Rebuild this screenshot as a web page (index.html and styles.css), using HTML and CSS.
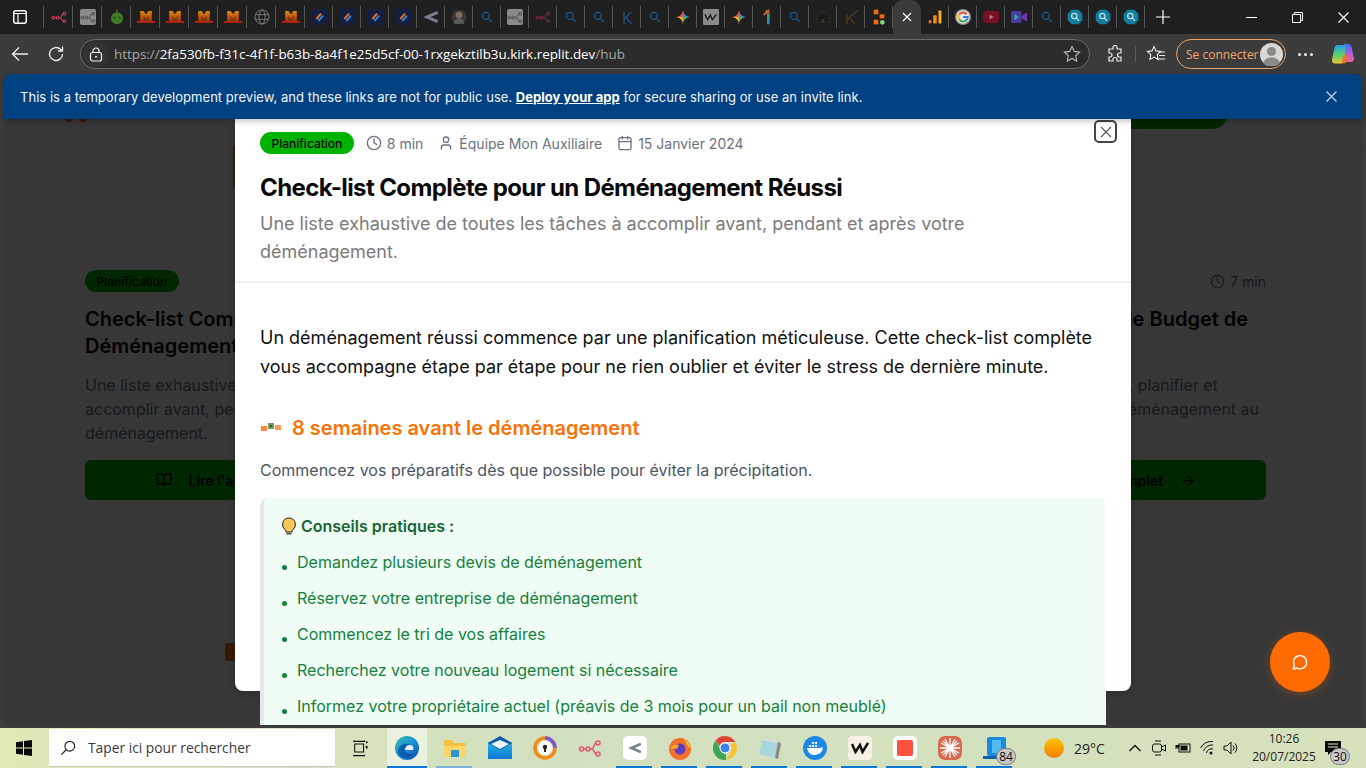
FILE: index.html
```html
<!DOCTYPE html>
<html lang="fr">

<head>
    <meta charset="UTF-8">
    <meta name="viewport" content="width=device-width, initial-scale=1.0">
    <title>Check-list Complète pour un Déménagement Réussi</title>
    <link rel="stylesheet" href="styles.css">
</head>

<body>
    <!-- icon sprites -->
    <svg class="sprites" aria-hidden="true">
        <defs>
            <linearGradient id="g-mistral" x1="0" y1="0" x2="0" y2="1"><stop offset="0" stop-color="#d98a10"/><stop offset="1" stop-color="#a81c10"/></linearGradient>
            <linearGradient id="g-edge" x1="0" y1="0" x2="1" y2="1"><stop offset="0" stop-color="#35c1a0"/><stop offset=".5" stop-color="#1a8fd8"/><stop offset="1" stop-color="#0c4fa8"/></linearGradient>
            <linearGradient id="g-sun" x1="0" y1="0" x2="0" y2="1"><stop offset="0" stop-color="#ffc400"/><stop offset="1" stop-color="#ee7d00"/></linearGradient>
            <linearGradient id="g-mail" x1="0" y1="0" x2="0" y2="1"><stop offset="0" stop-color="#28b4ee"/><stop offset="1" stop-color="#0f78d0"/></linearGradient>
            <linearGradient id="g-cop-a" x1="0" y1="0" x2="0" y2="1"><stop offset="0" stop-color="#1f9fe8"/><stop offset=".55" stop-color="#5fd06a"/><stop offset="1" stop-color="#f2c230"/></linearGradient>
            <linearGradient id="g-cop-b" x1="0" y1="0" x2="0" y2="1"><stop offset="0" stop-color="#3a6ff0"/><stop offset=".5" stop-color="#b05ae0"/><stop offset="1" stop-color="#f0609a"/></linearGradient>
            <symbol id="i-nodes" viewBox="0 0 24 24"><g fill="none" stroke="currentColor" stroke-width="1.6"><circle cx="3.5" cy="13" r="2"/><circle cx="10" cy="13" r="2"/><circle cx="20" cy="7" r="2"/><circle cx="20" cy="18" r="2"/><path d="M5.5 13H8M12 13h2c2 0 2-6 4-6M14 13c2 0 2 5 4 5"/></g></symbol>
            <symbol id="i-mistral" viewBox="0 0 24 24" preserveAspectRatio="none"><path d="M5 3h4l3 5 3-5h4v15h4v3H1v-3h4z" fill="url(#g-mistral)"/><path d="M9 10l3 5 3-5v8H9z" fill="#6b3d10"/></symbol>
            <symbol id="i-globe" viewBox="0 0 24 24"><g fill="none" stroke="#8a8a8a" stroke-width="1.2"><circle cx="12" cy="12" r="10.5"/><ellipse cx="12" cy="12" rx="4.5" ry="10.5"/><path d="M2 8.5h20M2 15.5h20"/></g></symbol>
            <symbol id="i-pencil" viewBox="0 0 24 24"><rect width="24" height="24" rx="2" fill="#152040"/><path d="M8 15l7-8" stroke="#d9742c" stroke-width="3"/><path d="M11 18l7-8" stroke="#3f7fc8" stroke-width="3"/></symbol>
            <symbol id="i-search" viewBox="0 0 24 24"><g fill="none" stroke="#1a5488" stroke-width="2.4"><circle cx="10" cy="10" r="6"/><path d="M14.5 14.5l6 6"/></g></symbol>
            <symbol id="i-octa" viewBox="0 0 24 24"><path d="M7 1h10l6 6v10l-6 6H7l-6-6V7z" fill="#127d9c"/><g fill="none" stroke="#b8dce6" stroke-width="2"><circle cx="11" cy="10.500" r="4"/><path d="M14 13.500l4 4"/></g></symbol>
            <symbol id="i-chev" viewBox="0 0 24 24"><g fill="none" stroke="#76808c" stroke-width="4.500"><path d="M22 5L6 12l16 7"/></g></symbol>
            <symbol id="i-gem" viewBox="0 0 24 24"><path d="M12 1c1 7 4 10 11 11H12z" fill="#3f8cf0"/><path d="M23 12c-7 1-10 4-11 11V12z" fill="#4aa860"/><path d="M12 23c-1-7-4-10-11-11h11z" fill="#e0b030"/><path d="M1 12c7-1 10-4 11-11v11z" fill="#d8584c"/></symbol>
            <symbol id="i-w" viewBox="0 0 24 24"><rect width="24" height="24" rx="2" fill="#8a8a86"/><path d="M3 8l4 8 4-7 3 7 6-8" fill="none" stroke="#161616" stroke-width="2"/></symbol>
            <symbol id="i-edit" viewBox="0 0 24 24"><path d="M12 2v4" stroke="#d8a020" stroke-width="4"/><path d="M7 9l7-6v4" fill="none" stroke="#d35a40" stroke-width="3"/><path d="M14 7v8" stroke="#38a060" stroke-width="4"/><path d="M14 15v8" stroke="#3a7ad0" stroke-width="4"/></symbol>
            <symbol id="i-arch" viewBox="0 0 24 24"><path d="M2 20C2 9 7 5 12 5s10 4 10 15z" fill="#1a1a1a" stroke="#303030" stroke-width="1.500"/><path d="M10 20v-5h4v5" fill="#3a3a18"/></symbol>
            <symbol id="i-klogo" viewBox="0 0 24 24"><path d="M6 23V8M6 16L22 2M9 13l9 9" fill="none" stroke="#54431c" stroke-width="1.800"/></symbol>
            <symbol id="i-flow" viewBox="0 0 24 24"><rect x="4" y="1" width="7" height="7" fill="#f06a10"/><rect x="13" y="8" width="7" height="6" fill="#f06a10"/><rect x="4" y="16" width="7" height="7" fill="#f06a10"/><circle cx="17" cy="20" r="3.500" fill="#7ed67a"/></symbol>
            <symbol id="i-bars" viewBox="0 0 24 24"><rect x="1" y="17" width="5" height="6" rx="2.500" fill="#e67818"/><rect x="9" y="9" width="6" height="14" rx="1" fill="#f08e18"/><rect x="18" y="1" width="5" height="22" rx="1" fill="#f6b01a"/></symbol>
            <symbol id="i-google" viewBox="0 0 24 24"><circle cx="12" cy="12" r="12" fill="#8c8c8c"/><circle cx="12" cy="12" r="10" fill="#e6e6e6"/><g fill="none" stroke-width="3"><path d="M17.500 8A7 7 0 0 0 6.500 8" stroke="#d8503f"/><path d="M6.500 8a7 7 0 0 0 0 8" stroke="#e3b21c"/><path d="M6.500 16a7 7 0 0 0 11 .5" stroke="#3ea45a"/><path d="M12 12h7a7 7 0 0 1-1.500 4.500" stroke="#4080e0"/></g></symbol>
            <symbol id="i-yt" viewBox="0 0 24 24"><rect y="3" width="24" height="18" rx="5" fill="#7a1028"/><path d="M10 8.500l6 3.500-6 3.500z" fill="#b88"/></symbol>
            <symbol id="i-video" viewBox="0 0 24 24"><rect y="3" width="16" height="18" rx="2" fill="#4a3a9c"/><path d="M16 10l8-5v14l-8-5z" fill="#6a3ab0"/><path d="M5 7l7 5-7 5z" fill="#25a8b0"/></symbol>
            <symbol id="i-clock" viewBox="0 0 24 24"><g fill="none" stroke="currentColor" stroke-width="2" stroke-linecap="round" stroke-linejoin="round"><circle cx="12" cy="12" r="10"/><path d="M12 6v6l4 2"/></g></symbol>
            <symbol id="i-user" viewBox="0 0 24 24"><g fill="none" stroke="currentColor" stroke-width="2" stroke-linecap="round" stroke-linejoin="round"><path d="M19 21v-2a4 4 0 0 0-4-4H9a4 4 0 0 0-4 4v2"/><circle cx="12" cy="7" r="4"/></g></symbol>
            <symbol id="i-cal" viewBox="0 0 24 24"><g fill="none" stroke="currentColor" stroke-width="2" stroke-linecap="round" stroke-linejoin="round"><path d="M8 2v4M16 2v4M3 10h18"/><rect x="3" y="4" width="18" height="18" rx="2"/></g></symbol>
            <symbol id="i-book" viewBox="0 0 24 24"><path d="M12 7v14M3 18a1 1 0 0 1-1-1V4a1 1 0 0 1 1-1h5a4 4 0 0 1 4 4 4 4 0 0 1 4-4h5a1 1 0 0 1 1 1v13a1 1 0 0 1-1 1h-6a3 3 0 0 0-3 3 3 3 0 0 0-3-3z" fill="none" stroke="currentColor" stroke-width="2" stroke-linecap="round" stroke-linejoin="round"/></symbol>
        </defs>
    </svg>

    <header class="tabstrip">
        <span class="tab-toggle"><svg width="14" height="14" viewBox="0 0 14 14"><rect x=".75" y=".75" width="12.500" height="12.500" rx="2" fill="none" stroke="#fff" stroke-width="1.500"/><path d="M1 3.500h12M5 3.500v9.500" stroke="#fff" stroke-width="1.200"/></svg></span>
        <span class="tab-sep"></span>
        <div class="tabs">
            <span class="tab wide pink"><svg><use href="#i-nodes"/></svg></span>
            <span class="tab wide"><svg class="tile-grey"><use href="#i-nodes"/></svg></span>
            <span class="tab wide"><svg viewBox="0 0 24 24"><circle cx="12" cy="14" r="9" fill="#3f7a26"/><rect x="11" y="1" width="2" height="5" fill="#3f7a26"/><circle cx="8" cy="13" r="1.500" fill="#24461a"/><circle cx="16" cy="13" r="1.500" fill="#24461a"/></svg></span>
            <span class="tab wide"><svg class="mistral"><use href="#i-mistral"/></svg></span>
            <span class="tab wide"><svg class="mistral"><use href="#i-mistral"/></svg></span>
            <span class="tab wide"><svg class="mistral"><use href="#i-mistral"/></svg></span>
            <span class="tab wide"><svg class="mistral"><use href="#i-mistral"/></svg></span>
            <span class="tab wide"><svg><use href="#i-globe"/></svg></span>
            <span class="tab wide"><svg class="mistral"><use href="#i-mistral"/></svg></span>
            <span class="tab"><svg><use href="#i-pencil"/></svg></span>
            <span class="tab"><svg><use href="#i-pencil"/></svg></span>
            <span class="tab"><svg><use href="#i-pencil"/></svg></span>
            <span class="tab"><svg><use href="#i-pencil"/></svg></span>
            <span class="tab"><svg><use href="#i-chev"/></svg></span>
            <span class="tab"><svg viewBox="0 0 24 24"><circle cx="12" cy="12" r="11" fill="#3a3734"/><circle cx="12" cy="9" r="5" fill="#7a6c62"/><path d="M4 22c1-6 4-8 8-8s7 2 8 8" fill="#5c5c5c"/></svg></span>
            <span class="tab"><svg class="small"><use href="#i-search"/></svg></span>
            <span class="tab"><svg class="tile-grey"><use href="#i-nodes"/></svg></span>
            <span class="tab pink-dim"><svg><use href="#i-nodes"/></svg></span>
            <span class="tab"><svg class="small"><use href="#i-search"/></svg></span>
            <span class="tab"><svg class="small"><use href="#i-search"/></svg></span>
            <span class="tab tab-k">K</span>
            <span class="tab"><svg class="small"><use href="#i-search"/></svg></span>
            <span class="tab"><svg><use href="#i-gem"/></svg></span>
            <span class="tab"><svg><use href="#i-w"/></svg></span>
            <span class="tab"><svg><use href="#i-gem"/></svg></span>
            <span class="tab"><svg><use href="#i-edit"/></svg></span>
            <span class="tab"><svg class="small"><use href="#i-search"/></svg></span>
            <span class="tab"><svg><use href="#i-arch"/></svg></span>
            <span class="tab"><svg><use href="#i-klogo"/></svg></span>
            <span class="tab"><svg><use href="#i-flow"/></svg></span>
            <span class="tab active"><svg class="tab-close" viewBox="0 0 10 10"><path d="M1 1l8 8M9 1L1 9" stroke="#fff" stroke-width="1.200"/></svg></span>
            <span class="tab"><svg class="bars"><use href="#i-bars"/></svg></span>
            <span class="tab"><svg><use href="#i-google"/></svg></span>
            <span class="tab"><svg><use href="#i-yt"/></svg></span>
            <span class="tab"><svg><use href="#i-video"/></svg></span>
            <span class="tab"><svg class="small"><use href="#i-search"/></svg></span>
            <span class="tab"><svg><use href="#i-octa"/></svg></span>
            <span class="tab"><svg><use href="#i-octa"/></svg></span>
            <span class="tab"><svg><use href="#i-octa"/></svg></span>
        </div>
        <span class="new-tab"><svg width="14" height="14" viewBox="0 0 14 14"><path d="M7 0v14M0 7h14" stroke="#fff" stroke-width="1.200"/></svg></span>
        <div class="win-controls">
            <span><svg width="11" height="11" viewBox="0 0 11 11"><path d="M0 5.500h11" stroke="#fff"/></svg></span>
            <span><svg width="11" height="11" viewBox="0 0 11 11"><path d="M.5 2.500h8v8h-8zM2.500 2.500v-2h8v8h-2" fill="none" stroke="#fff"/></svg></span>
            <span><svg width="11" height="11" viewBox="0 0 11 11"><path d="M.5.5l10 10M10.500.5l-10 10" stroke="#fff" stroke-width="1.100"/></svg></span>
        </div>
    </header>

    <nav class="toolbar">
        <span class="tool back"><svg width="18" height="16" viewBox="0 0 18 16"><path d="M17 8H1.500M8 1.500L1.500 8 8 14.500" fill="none" stroke="#eee" stroke-width="1.300"/></svg></span>
        <span class="tool reload"><svg width="18" height="18" viewBox="0 0 18 18"><path d="M15.500 9a6.500 6.500 0 1 1-2-4.700L15.500 6M15.500 1.500V6H11" fill="none" stroke="#eee" stroke-width="1.300"/></svg></span>
        <div class="urlbar">
            <span class="lock"><svg width="14" height="15" viewBox="0 0 14 15"><rect x="1.500" y="5.500" width="11" height="8.500" rx="2" fill="none" stroke="#eee" stroke-width="1.200"/><path d="M4 5.500V4a3 3 0 0 1 6 0v1.500" fill="none" stroke="#eee" stroke-width="1.200"/><circle cx="7" cy="9.700" r="1" fill="#eee"/></svg></span>
            <span class="url"><span class="url-dim">https://</span>2fa530fb-f31c-4f1f-b63b-8a4f1e25d5cf-00-1rxgekztilb3u.kirk.replit.dev<span class="url-dim">/hub</span></span>
            <svg class="url-star" width="18" height="18" viewBox="0 0 18 18"><path d="M9 1.500l2.300 4.900 5.300.7-3.900 3.700 1 5.300L9 13.500l-4.700 2.600 1-5.300L1.400 7.100l5.300-.7z" fill="none" stroke="#bbb" stroke-width="1.100"/></svg>
        </div>
        <span class="tool ext"><svg width="18" height="18" viewBox="0 0 18 18"><path d="M7 2.500a2 2 0 0 1 4 0V4h4v4h-1.500a2 2 0 0 0 0 4H15v4h-4v-1.500a2 2 0 0 0-4 0V16H3v-4h1a2 2 0 0 0 0-4H3V4h4z" fill="none" stroke="#eee" stroke-width="1.200"/></svg></span>
        <span class="tool-sep"></span>
        <span class="tool fav"><svg width="20" height="18" viewBox="0 0 20 18"><path d="M8 1.500l2 4.400 4.600.6-3.400 3.200.9 4.700L8 12.100l-4.100 2.300.9-4.700L1.400 6.500 6 5.900z" fill="none" stroke="#eee" stroke-width="1.100"/><path d="M13 7h6M13 10.500h6M11 14h8" stroke="#eee" stroke-width="1.100"/></svg></span>
        <div class="signin">
            <span>Se connecter</span>
            <svg class="avatar" width="23" height="23" viewBox="0 0 23 23"><circle cx="11.500" cy="11.500" r="11.500" fill="#d8d8d4"/><circle cx="11.500" cy="8.500" r="4.500" fill="#8a8a86"/><path d="M3 20c1.500-4 4.500-5.500 8.500-5.500S18.500 16 20 20a11.500 11.500 0 0 1-17 0z" fill="#8a8a86"/></svg>
        </div>
        <span class="tool dots"><i></i><i></i><i></i></span>
        <span class="tool copilot"><svg width="24" height="24" viewBox="0 0 24 24"><path d="M13 2h4c2 0 3 1 3.500 3L23 16c.4 2-1 4-3 4h-7l1.500-11c.2-1.500-.5-2.500-2-2.500z" fill="url(#g-cop-b)"/><path d="M7 3h6c2 0 2.500 1.500 2 3.500L13.500 18c-.4 2-1.500 3.500-3.500 3.500H4c-2 0-3.500-2-3-4L3.500 6C4 4 5 3 7 3z" fill="url(#g-cop-a)"/><path d="M12 13h6l-2 6c-.5 1.500-1.500 2.500-3 2.500h-2z" fill="#f0703a" opacity=".9"/></svg></span>
    </nav>

    <div class="frame">
        <div class="banner">
            <p>This is a temporary development preview, and these links are not for public use. <a href="#">Deploy your app</a> for secure sharing or use an invite link.</p>
            <svg width="11" height="11" viewBox="0 0 11 11"><path d="M.5.5l10 10M10.500.5l-10 10" stroke="#c5d4e6" stroke-width="1.200"/></svg>
        </div>

        <div class="page">
            <!-- dimmed page behind the dialog -->
            <div class="site-head">
                <span class="site-logo"><i></i><i></i></span>
                <span class="site-cta"></span>
            </div>
            <div class="card-grid">
                <article class="card">
                    <div class="card-media"><span class="media-glow"></span></div>
                    <div class="card-meta"><span class="card-pill">Planification</span></div>
                    <h3>Check-list Complète pour un Déménagement Réussi</h3>
                    <p>Une liste exhaustive de toutes les tâches à accomplir avant, pendant et après votre déménagement.</p>
                    <a class="card-btn"><svg><use href="#i-book"/></svg>Lire l'article complet<b>→</b></a>
                </article>
                <article class="card"></article>
                <article class="card">
                    <div class="card-media"></div>
                    <div class="card-meta"><span class="card-time"><svg><use href="#i-clock"/></svg>7 min</span></div>
                    <h3>Comment Bien Gérer le Budget de Déménagement</h3>
                    <p>Tous les outils pour estimer, planifier et prévoir les coûts de votre déménagement au meilleur prix.</p>
                    <a class="card-btn"><svg><use href="#i-book"/></svg>Lire l'article complet<b>→</b></a>
                </article>
                <article class="card card-next"><span class="media-icon"></span></article>
                <article class="card card-next"></article>
                <article class="card card-next"></article>
            </div>
            <div class="scrim"></div>

            <section class="modal">
                <button class="modal-close"><svg width="14" height="14" viewBox="0 0 14 14"><path d="M2 2l10 10M12 2L2 12" stroke="#555" stroke-width="1.100"/></svg></button>
                <div class="modal-head">
                    <div class="meta">
                        <span class="pill">Planification</span>
                        <span class="meta-item"><svg><use href="#i-clock"/></svg>8 min</span>
                        <span class="meta-item"><svg><use href="#i-user"/></svg>Équipe Mon Auxiliaire</span>
                        <span class="meta-item"><svg><use href="#i-cal"/></svg>15 Janvier 2024</span>
                    </div>
                    <h1>Check-list Complète pour un Déménagement Réussi</h1>
                    <p class="subtitle">Une liste exhaustive de toutes les tâches à accomplir avant, pendant et après votre déménagement.</p>
                </div>
                <div class="modal-body">
                    <p class="intro">Un déménagement réussi commence par une planification méticuleuse. Cette check-list complète vous accompagne étape par étape pour ne rien oublier et éviter le stress de dernière minute.</p>
                    <h2><svg width="22" height="10" viewBox="0 0 22 10"><rect x="1" y="3" width="6" height="5" fill="#f58a3c"/><rect x="8" y="0" width="6" height="6" fill="#6f9a5a"/><rect x="10" y="2" width="2" height="2" fill="#3d5a34"/><rect x="15" y="2" width="6" height="5" fill="#f79a5a"/></svg>8 semaines avant le déménagement</h2>
                    <p class="lead">Commencez vos préparatifs dès que possible pour éviter la précipitation.</p>
                    <div class="tips">
                        <h4><svg width="16" height="18" viewBox="0 0 16 18"><path d="M8 1a6.500 6.500 0 0 0-4 11.600c.8.700 1 1.400 1 2.400h6c0-1 .2-1.700 1-2.400A6.500 6.500 0 0 0 8 1z" fill="#fdc75c" stroke="#222" stroke-width="1"/><path d="M5.500 16h5v1.500h-5z" fill="#555"/></svg>Conseils pratiques :</h4>
                        <ul>
                            <li>Demandez plusieurs devis de déménagement</li>
                            <li>Réservez votre entreprise de déménagement</li>
                            <li>Commencez le tri de vos affaires</li>
                            <li>Recherchez votre nouveau logement si nécessaire</li>
                            <li>Informez votre propriétaire actuel (préavis de 3 mois pour un bail non meublé)</li>
                        </ul>
                    </div>
                </div>
            </section>

            <button class="chat-fab"><svg width="18" height="18" viewBox="0 0 18 18"><path d="M2.200 16l1-3.600A6.600 6.600 0 1 1 5.800 15z" fill="none" stroke="#fff" stroke-width="1.400" stroke-linejoin="round"/></svg></button>
        </div>
    </div>

    <footer class="taskbar">
        <span class="start"><svg width="16" height="16" viewBox="0 0 16 16"><path d="M0 2.200l7-1V7.500H0zM8 1l8-1v7.500H8zM0 8.500h7v6.300l-7-1zM8 8.500h8V16l-8-1.100z" fill="#0a0a0a"/></svg></span>
        <div class="task-search">
            <svg width="16" height="16" viewBox="0 0 18 18"><circle cx="11" cy="7" r="5.500" fill="none" stroke="#222" stroke-width="1.300"/><path d="M7 11l-5.500 5.500" stroke="#222" stroke-width="1.400"/></svg>
            <span>Taper ici pour rechercher</span>
        </div>
        <span class="taskview"><svg width="16" height="17" viewBox="0 0 18 18"><path d="M2 0v1h12V0M3 4h10v9H3zM2 16v1h12v-1" fill="none" stroke="#111" stroke-width="1.200"/><rect x="15.500" y="1" width="2" height="2" fill="#111"/><rect x="15.500" y="6" width="2" height="3" fill="#111"/></svg></span>
        <div class="task-apps">
            <span class="app current on"><svg width="24" height="24" viewBox="0 0 24 24"><circle cx="12" cy="12" r="12" fill="url(#g-edge)"/><path d="M3 15c1-6 6-8 10-7 4 1 5 4 4 6h-7c0 3 4 5 10 3-3 5-9 6-13 4-3-1-4-3-4-6z" fill="#0c5cb0"/><path d="M10 14c0-3 2-5 5-5s4 3 3 5z" fill="#fff" opacity=".9"/></svg></span>
            <span class="app on-light"><svg width="24" height="24" viewBox="0 0 24 24"><path d="M1 4h8l2 3h12v14H1z" fill="#f5c242"/><rect x="1" y="10" width="22" height="11" fill="#fbd46a"/><rect x="8" y="14" width="8" height="7" fill="#2b95d6"/></svg></span>
            <span class="app"><svg width="24" height="24" viewBox="0 0 24 24"><rect y="6" width="24" height="17" fill="url(#g-mail)"/><path d="M0 7L12 0l12 7-12 7z" fill="#0c5ba8"/><path d="M3 8l9-4 9 4-9 5z" fill="#eaf4fb"/></svg></span>
            <span class="app"><svg width="24" height="24" viewBox="0 0 24 24"><circle cx="12" cy="12" r="10" fill="none" stroke="#f08c1a" stroke-width="3.500"/><path d="M12 2a10 10 0 0 1 10 10" fill="none" stroke="#7a5ad0" stroke-width="3.500"/><circle cx="12" cy="12" r="7" fill="#fff"/><circle cx="12" cy="11" r="2.200" fill="#222"/><rect x="11" y="11" width="2" height="5" fill="#222"/></svg></span>
            <span class="app app-pink"><svg width="24" height="24"><use href="#i-nodes"/></svg></span>
            <span class="app on"><span class="app-tile white"><svg width="14" height="14"><use href="#i-chev"/></svg></span></span>
            <span class="app on"><svg width="24" height="24" viewBox="0 0 24 24"><circle cx="12" cy="13" r="11" fill="#f2702a"/><path d="M15 1c1 3 7 5 8 12l-4-4z" fill="#ffc01f"/><circle cx="12" cy="13" r="5.500" fill="#5b3cc4"/><path d="M2 12c2-3 6-4 9-3l-2 4z" fill="#ffa42b"/></svg></span>
            <span class="app on"><svg width="24" height="24" viewBox="0 0 24 24"><path d="M12 0a12 12 0 0 1 10.400 6H12a6 6 0 0 0-5.600 3.800L2.700 4.400A12 12 0 0 1 12 0z" fill="#dd4436"/><path d="M22.400 6A12 12 0 0 1 13 23.900l4.300-7.400A6 6 0 0 0 17.200 9z" fill="#fbc02d"/><path d="M13 24A12 12 0 0 1 2.700 4.400l4.700 8A6 6 0 0 0 13 18z" fill="#3da554"/><circle cx="12" cy="12" r="5" fill="#3f80ec" stroke="#fff" stroke-width="1"/></svg></span>
            <span class="app on-split"><svg width="24" height="24" viewBox="0 0 24 24"><path d="M5 2l15 3-3 17-16-4z" fill="#a6d8de"/><path d="M20 5l3 3-3 15-3-1z" fill="#8a8c80"/><path d="M5 2l15 3-.5 2L4.500 4z" fill="#ddd"/></svg></span>
            <span class="app on"><svg width="24" height="24" viewBox="0 0 24 24"><circle cx="12" cy="12" r="12" fill="#1d87e6"/><path d="M4 12h13c1-1 2-1 3 0-1 5-5 7-9 7-4 0-6-3-7-7z" fill="#fff"/><path d="M6 9h2v2H6zM9 9h2v2H9zM12 9h2v2h-2zM9 6h2v2H9zM12 6h2v2h-2z" fill="#fff"/></svg></span>
            <span class="app on"><span class="app-tile cream"><svg width="18" height="12" viewBox="0 0 18 12"><path d="M1 2l3.500 8L9 3l2.500 7L17 1" fill="none" stroke="#111" stroke-width="2.500"/></svg></span></span>
            <span class="app on"><span class="app-tile white"><span class="red-square"></span></span></span>
            <span class="app on"><span class="app-tile burst"><svg width="20" height="20" viewBox="0 0 20 20"><path d="M10 0v20M0 10h20M3 3l14 14M17 3L3 17M5 1l10 18M15 1L5 19M1 5l18 10M19 5L1 15" stroke="#fff" stroke-width="1.300"/></svg></span></span>
            <span class="app on"><svg width="24" height="24" viewBox="0 0 24 24"><rect x="4" y="1" width="19" height="19" rx="2" fill="#1a8ae0"/><rect x="9" y="4" width="9" height="13" fill="#54baf0"/><path d="M0 20h16v3H0z" fill="#0f5fae"/></svg><span class="count">84</span></span>
        </div>
        <div class="tray">
            <span class="weather"><svg width="20" height="20" viewBox="0 0 20 20"><circle cx="10" cy="10" r="10" fill="url(#g-sun)"/></svg>29°C</span>
            <span class="tray-icon"><svg width="12" height="8" viewBox="0 0 12 8"><path d="M.5 7L6 1.500 11.500 7" fill="none" stroke="#111" stroke-width="1.300"/></svg></span>
            <span class="tray-icon"><svg width="14" height="18" viewBox="0 0 14 18"><path d="M3 2h6M3 16h6" stroke="#111"/><rect x=".5" y="5" width="9" height="8" rx="2" fill="none" stroke="#111"/><path d="M9.500 8l4-2v6l-4-2" fill="none" stroke="#111"/></svg></span>
            <span class="tray-icon"><svg width="16" height="12" viewBox="0 0 16 12"><rect x="4" y="2" width="11" height="8" fill="none" stroke="#111"/><rect x="5.500" y="3.500" width="7" height="5" fill="#111"/><path d="M0 6h4M1 3v2h3V3" stroke="#111"/></svg></span>
            <span class="tray-icon"><svg width="14" height="14" viewBox="0 0 14 14"><g fill="none" stroke="#111"><path d="M.5 7A13 13 0 0 1 13 .500M3.500 10A9 9 0 0 1 13 4M6.500 12A5 5 0 0 1 13 8"/></g><circle cx="11" cy="12" r="1.500" fill="#111"/></svg></span>
            <span class="tray-icon"><svg width="16" height="14" viewBox="0 0 16 14"><path d="M1 5h3l4-4v12L4 9H1z" fill="none" stroke="#111"/><path d="M10 4.500a3.500 3.500 0 0 1 0 5M12 2.500a6.500 6.500 0 0 1 0 9" fill="none" stroke="#111"/></svg></span>
            <div class="clock"><span>10:26</span><span>20/07/2025</span></div>
            <span class="notif"><svg width="16" height="14" viewBox="0 0 16 14"><path d="M0 0h16v11H6l-3 3v-3H0z" fill="#0a0a0a"/><path d="M3 3h10M3 6h10" stroke="#dfe6c5"/></svg><span class="count">30</span></span>
        </div>
    </footer>
</body>

</html>
```
FILE: styles.css
```css
* {
    box-sizing: border-box;
}

html,
body {
    margin: 0;
    height: 100%;
}

body {
    width: 1366px;
    height: 768px;
    overflow: hidden;
    display: flex;
    flex-direction: column;
    font-family: "Inter", sans-serif;
    background-color: #3b3b3b;
}

.sprites {
    position: absolute;
    width: 0;
    height: 0;
}

/* browser chrome */
.tabstrip {
    height: 34px;
    flex: none;
    display: flex;
    align-items: center;
    background-color: #1f1f1f;
}

.tab-toggle {
    width: 44px;
    display: flex;
    justify-content: center;
    padding-right: 4px;
}

.tab-sep {
    width: 1px;
    height: 22px;
    margin-left: -1px;
    background-color: #555;
}

.tabs {
    display: flex;
    height: 34px;
}

.tab {
    width: 28px;
    height: 34px;
    flex: none;
    display: flex;
    align-items: center;
    justify-content: center;
    position: relative;
    color: #9a9a9a;
}

.tab::after {
    content: "";
    position: absolute;
    right: 0;
    top: 6px;
    height: 22px;
    width: 1px;
    background-color: #555;
}

.tab.wide {
    width: 29px;
}

.tab svg {
    width: 16px;
    height: 16px;
}

.tab svg.mistral {
    width: 20px;
    height: 16px;
}

.tab svg.small {
    width: 14px;
    height: 14px;
}

.tab svg.bars {
    width: 14px;
    height: 14px;
}

.tab svg.tile-grey {
    background-color: #8a8a8a;
    border-radius: 2px;
    color: #555;
}

.tab.pink {
    color: #c8405f;
}

.tab.pink-dim {
    color: #7a2c40;
}

.tab-k {
    font-size: 17px;
    font-family: "Open Sans", sans-serif;
    color: #234a8a;
}

.tab.active {
    background-color: #3b3b3b;
    border-radius: 10px 10px 0 0;
}

.tab.active::after {
    display: none;
}

.tab svg.tab-close {
    width: 10px;
    height: 10px;
}

.new-tab {
    width: 36px;
    display: flex;
    justify-content: center;
}

.win-controls {
    margin-left: auto;
    display: flex;
}

.win-controls span {
    width: 46px;
    display: flex;
    justify-content: center;
}

.toolbar {
    height: 40px;
    flex: none;
    display: flex;
    align-items: center;
    background-color: #3b3b3b;
}

.tool {
    flex: none;
    display: flex;
    align-items: center;
    justify-content: center;
}

.back {
    width: 40px;
}

.reload {
    width: 32px;
}

.urlbar {
    width: 1010px;
    height: 30px;
    flex: none;
    margin-left: 8px;
    display: flex;
    align-items: center;
    border: 1px solid #6c6c6c;
    border-radius: 15px;
    background-color: #2b2b2b;
}

.lock {
    width: 26px;
    height: 26px;
    margin-left: 2px;
    display: flex;
    align-items: center;
    justify-content: center;
    border-radius: 50%;
    background-color: #333;
}

.url {
    margin-left: 5px;
    font-family: "Open Sans", sans-serif;
    font-size: 13.400px;
    color: #fff;
    white-space: nowrap;
}

.url-dim {
    color: #a8a8a8;
}

.url-star {
    margin-left: auto;
    margin-right: 8px;
}

.ext {
    width: 45px;
    padding-left: 5px;
}

.tool-sep {
    width: 1px;
    height: 16px;
    flex: none;
    background-color: #5a5a5a;
}

.fav {
    width: 40px;
}

.signin {
    width: 110px;
    height: 30px;
    flex: none;
    display: flex;
    align-items: center;
    justify-content: space-between;
    padding: 0 2px 0 9px;
    border: 1px solid #e9a468;
    border-radius: 15px;
    font-family: "Open Sans", sans-serif;
    font-size: 12px;
    color: #f1a86c;
}

.dots {
    width: 38px;
    gap: 3px;
}

.dots i {
    width: 3px;
    height: 3px;
    border-radius: 50%;
    background-color: #eee;
}

.copilot {
    width: 38px;
}

/* page area */
.frame {
    flex: 1;
    min-height: 0;
    display: flex;
    flex-direction: column;
    padding: 0 4px 3px;
    background-color: #3b3b3b;
}

.banner {
    height: 45px;
    flex: none;
    display: flex;
    align-items: center;
    justify-content: space-between;
    padding: 0 25px 0 16px;
    position: relative;
    z-index: 5;
    border-radius: 8px 8px 0 0;
    background-color: #004182;
    box-shadow: 0 2px 6px rgba(0, 0, 0, 0.25);
}

.banner p {
    margin: 0;
    font-size: 13px;
    letter-spacing: 0.03px;
    color: #f2f5f9;
}

.banner a {
    font-weight: 700;
    color: #fff;
}

.page {
    flex: 1;
    min-height: 0;
    position: relative;
    overflow: hidden;
    background-color: #fff;
}

.site-head {
    height: 27px;
    display: flex;
    justify-content: space-between;
    align-items: flex-end;
    padding: 0 135px 16px 61px;
    background-color: #fff;
    border-bottom: 1px solid #e5e7eb;
}

.site-logo {
    display: flex;
    gap: 6px;
    margin-bottom: 7px;
}

.site-logo i {
    width: 8px;
    height: 4px;
    border-radius: 0 0 4px 4px;
    background-color: #f06a10;
}

.site-cta {
    width: 180px;
    height: 30px;
    margin-top: -20px;
    border-radius: 0 0 14px 14px;
    background-color: #00b300;
}

.card-grid {
    display: grid;
    grid-template-columns: repeat(3, 1fr);
    gap: 26px 24px;
    padding: 0 71px 0 56px;
    background-color: #fff;
}

.card {
    height: 378px;
    padding: 0 24px;
    position: relative;
    border: 1px solid #eeeeee;
    border-top: none;
    border-radius: 0 0 12px 12px;
    background-color: #fff;
}

.card-next {
    border-top: 1px solid #eeeeee;
    border-radius: 12px;
}

.card-media {
    height: 124px;
    position: relative;
}

.media-glow {
    position: absolute;
    left: 148px;
    top: 0;
    width: 60px;
    height: 42px;
    background-color: #f28a2c;
}

.media-icon {
    position: absolute;
    left: 164px;
    top: 92px;
    width: 60px;
    height: 18px;
    border-radius: 2px;
    background-color: #f97316;
}

.card-meta {
    height: 22px;
    display: flex;
    justify-content: space-between;
    align-items: center;
}

.card-pill {
    height: 22px;
    padding: 0 11.500px;
    display: flex;
    align-items: center;
    border-radius: 11px;
    font-size: 12px;
    font-weight: 500;
    color: #000;
    background-color: #00b300;
}

.card-time {
    margin-left: auto;
    display: flex;
    align-items: center;
    gap: 5px;
    font-size: 14px;
    color: #6b7280;
}

.card-time svg {
    width: 15px;
    height: 15px;
}

.card h3 {
    margin: 14px 0 0;
    font-size: 20px;
    line-height: 27px;
    font-weight: 600;
    color: #0a0a0a;
}

.card p {
    margin: 13px 0 0;
    font-size: 16px;
    line-height: 24px;
    color: #6b7280;
}

.card-btn {
    margin-top: 15px;
    height: 40px;
    display: flex;
    align-items: center;
    justify-content: center;
    gap: 17px;
    border-radius: 6px;
    font-size: 14px;
    font-weight: 600;
    color: #000;
    background-color: #00b300;
}

.card-btn svg {
    width: 16px;
    height: 16px;
}

.card-btn b {
    font-weight: 400;
    font-size: 16px;
}

.scrim {
    position: absolute;
    inset: 0;
    background-color: rgba(0, 0, 0, 0.785);
}

/* dialog */
.modal {
    position: absolute;
    left: 231px;
    top: 0;
    width: 896px;
    height: 572px;
    background-color: #fff;
    border-radius: 0 0 8px 8px;
    box-shadow: 0 2px 8px rgba(0, 0, 0, 0.2);
}

.modal-close {
    position: absolute;
    right: 14px;
    top: 1px;
    width: 23px;
    height: 23px;
    padding: 0;
    display: flex;
    align-items: center;
    justify-content: center;
    border: 2px solid #444;
    border-radius: 5px;
    background-color: #fff;
}

.modal-head {
    padding: 13px 60px 15px 25px;
    border-bottom: 2px solid #f0f0f0;
}

.meta {
    display: flex;
    align-items: center;
    gap: 15px;
}

.pill {
    height: 22px;
    margin-right: -3px;
    padding: 0 11.500px;
    display: flex;
    align-items: center;
    border-radius: 11px;
    font-size: 12px;
    font-weight: 500;
    color: #000;
    background-color: #00b300;
}

.meta-item {
    display: flex;
    align-items: center;
    gap: 5px;
    font-size: 14px;
    color: #6b7280;
}

.meta-item svg {
    width: 16px;
    height: 16px;
}

.modal-head h1 {
    margin: 18px 0 0;
    font-size: 24px;
    line-height: 32px;
    font-weight: 700;
    letter-spacing: -0.6px;
    color: #0a0a0a;
}

.subtitle {
    margin: 6px 0 0;
    font-size: 18px;
    line-height: 28px;
    color: #7b7b7b;
}

.modal-body {
    padding: 40px 25px 0;
}

.intro {
    margin: 0;
    font-size: 18px;
    line-height: 29px;
    color: #111;
}

.modal-body h2 {
    margin: 33px 0 0;
    display: flex;
    align-items: center;
    gap: 10px;
    font-size: 20px;
    line-height: 28px;
    font-weight: 600;
    color: #f97306;
}

.lead {
    margin: 16px 0 0;
    font-size: 16px;
    line-height: 24px;
    color: #4b5563;
}

.tips {
    margin-top: 16px;
    padding: 16px 17px 12px;
    border-left: 4px solid #e5e7eb;
    border-radius: 8px;
    background-color: #f0fdf4;
}

.tips h4 {
    margin: 0;
    display: flex;
    align-items: center;
    gap: 4px;
    font-size: 16px;
    line-height: 24px;
    font-weight: 600;
    color: #166534;
}

.tips ul {
    margin: 12px 0 0;
    padding: 0;
    list-style: none;
}

.tips li {
    position: relative;
    margin-bottom: 12px;
    padding-left: 16px;
    font-size: 16px;
    line-height: 24px;
    color: #15803d;
}

.tips li::before {
    content: "";
    position: absolute;
    left: 1px;
    top: 15px;
    width: 5px;
    height: 5px;
    border-radius: 50%;
    background-color: #15803d;
}

.chat-fab {
    position: absolute;
    left: 1266px;
    top: 513px;
    width: 60px;
    height: 60px;
    padding: 0;
    display: flex;
    align-items: center;
    justify-content: center;
    border: none;
    border-radius: 50%;
    background-color: #ff6b00;
    box-shadow: 0 2px 10px rgba(255, 107, 0, 0.3);
}

/* windows taskbar */
.taskbar {
    height: 40px;
    flex: none;
    display: flex;
    align-items: center;
    background: linear-gradient(90deg, #dfe8b6, #d2e0c0 40%, #d6e2bc);
    font-family: "Open Sans", sans-serif;
    color: #222;
}

.start {
    width: 48px;
    flex: none;
    display: flex;
    justify-content: center;
}

.task-search {
    width: 286px;
    height: 38px;
    flex: none;
    margin-left: 1px;
    margin-right: 1px;
    display: flex;
    align-items: center;
    gap: 12px;
    padding-left: 11px;
    background-color: #fff;
    border-bottom: 1px solid #c8c8c8;
    font-size: 13.800px;
    color: #3a3a3a;
}

.taskview {
    width: 48px;
    flex: none;
    display: flex;
    justify-content: center;
}

.task-apps {
    display: flex;
    flex: none;
    height: 40px;
    margin-left: 3px;
}

.app {
    width: 45px;
    height: 40px;
    flex: none;
    display: flex;
    align-items: center;
    justify-content: center;
    position: relative;
}

.app.current {
    width: 40px;
    margin-right: 5px;
    background-color: rgba(255, 255, 255, 0.5);
}

.app.on::after,
.app.on-light::after,
.app.on-split::after {
    content: "";
    position: absolute;
    left: 4px;
    right: 5px;
    bottom: 0;
    height: 2px;
    background-color: #0a78d4;
}

.app.current::after {
    left: 0;
    right: 0;
}

.app.on-light::after {
    background-color: #7fb4de;
}

.app-pink {
    color: #de5a78;
}

.app-tile {
    width: 20px;
    height: 20px;
    display: flex;
    align-items: center;
    justify-content: center;
    border-radius: 4px;
}

.app-tile.white {
    width: 24px;
    height: 24px;
    background-color: #fff;
    border-radius: 5px;
}

.app-tile.cream {
    width: 24px;
    height: 24px;
    background-color: #f7f0e4;
}

.app-tile.burst {
    width: 24px;
    height: 24px;
    border-radius: 7px;
    background-color: #d96a50;
}

.red-square {
    width: 16px;
    height: 16px;
    border-radius: 2px;
    background-color: #fb5241;
}

.count {
    position: absolute;
    left: 24px;
    bottom: 3px;
    width: 20px;
    height: 17px;
    display: flex;
    align-items: center;
    justify-content: center;
    border: 1px solid #777;
    border-radius: 9px;
    background-color: #c8c8c8;
    font-size: 12px;
    color: #111;
}

.tray {
    flex: 1;
    height: 40px;
    display: flex;
    align-items: center;
    padding-left: 27px;
}

.weather {
    width: 79px;
    flex: none;
    display: flex;
    align-items: center;
    gap: 10px;
    font-size: 14px;
}

.tray-icon {
    width: 24px;
    flex: none;
    display: flex;
    justify-content: center;
}

.clock {
    width: 76px;
    flex: none;
    margin-left: 3px;
    display: flex;
    flex-direction: column;
    align-items: center;
    gap: 2px;
    font-size: 12px;
    line-height: 16px;
}

.notif {
    position: relative;
    margin-left: -1px;
    width: 24px;
    flex: none;
    display: flex;
    justify-content: center;
}

.notif .count {
    left: 9px;
    bottom: -10px;
}
```
